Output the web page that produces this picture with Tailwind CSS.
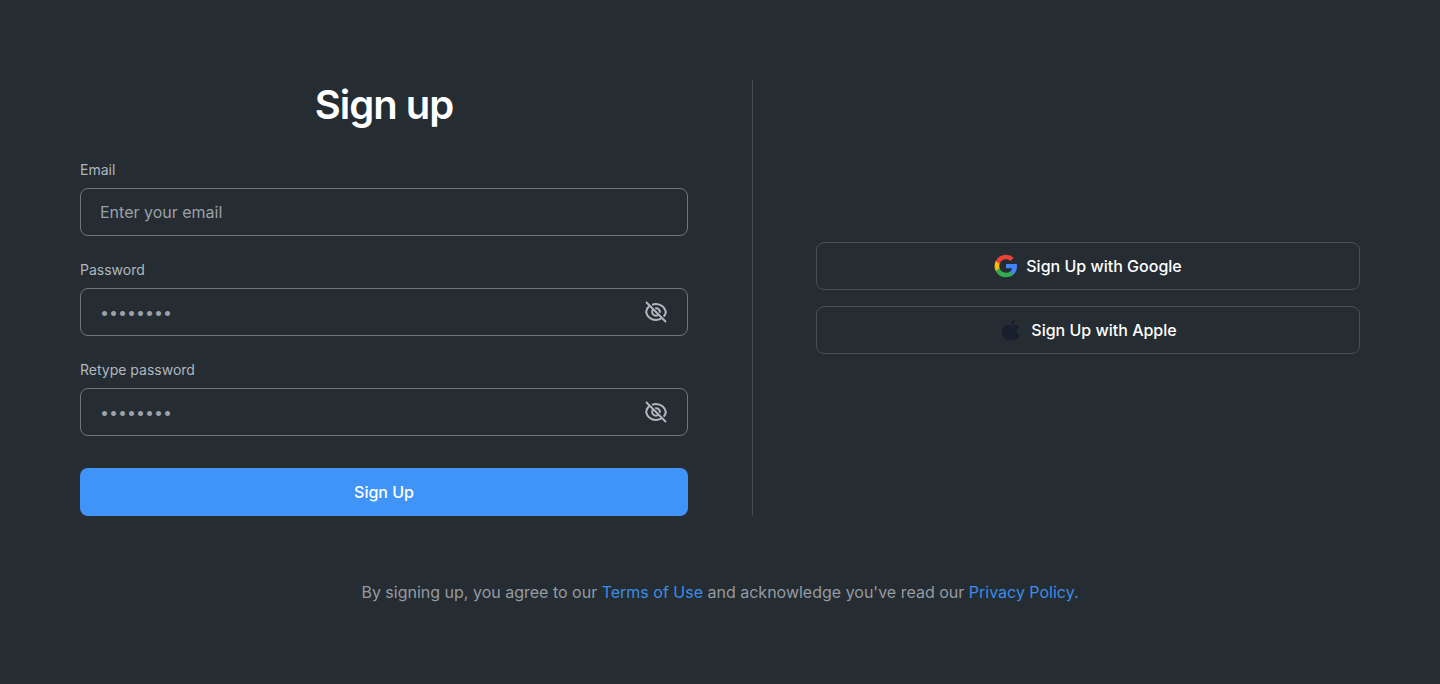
<!DOCTYPE html>
<html lang="en">
<head>
<meta charset="utf-8">
<meta name="viewport" content="width=device-width, initial-scale=1">
<title>Sign up</title>
<script src="https://cdn.jsdelivr.net/npm/@tailwindcss/browser@4"></script>
</head>
<body class="min-h-screen bg-[#252c32] font-['Inter',sans-serif] text-base text-white">
<svg class="hidden">
  <symbol id="eye-off" viewBox="0 0 24 24"><g fill="none" stroke="currentColor" stroke-width="2"><path d="M5.500 5.900C3.600 7.400 2.400 9.600 2.100 12c.9 4.600 4.900 8 9.900 8 2.400 0 4.600-.8 6.300-2.200"/><path d="M8 4.900C9.200 4.300 10.600 4 12 4c5 0 9 3.400 9.900 8-.3 1.700-1.100 3.300-2.200 4.600"/><path d="M9.300 9.300a3.700 3.700 0 0 0 5.300 5.300"/><path d="M11.200 8.300a3.700 3.700 0 0 1 4.500 4.500"/><path d="m2 2 20 20"/></g></symbol>
</svg>
<main class="p-6 md:p-20">
  <div class="grid gap-10 md:grid-cols-[21fr_19fr] md:gap-0">
    <form class="md:pr-16">
      <h1 class="mb-[30px] text-center text-[40px] leading-[50px] font-semibold tracking-tight">Sign up</h1>
      <div class="flex flex-col gap-6">
        <div class="flex flex-col gap-2">
          <label for="email" class="text-sm text-[#b0b7bf]">Email</label>
          <input id="email" type="email" placeholder="Enter your email" class="h-12 w-full rounded-lg border border-[#6e757c] bg-transparent px-[19px] placeholder:text-[#9aa1a9] focus:outline-none">
        </div>
        <div class="flex flex-col gap-2">
          <label for="password" class="text-sm text-[#b0b7bf]">Password</label>
          <div class="flex h-12 items-center rounded-lg border border-[#6e757c] px-[19px]">
            <input id="password" type="password" placeholder="••••••••" class="min-w-0 flex-1 bg-transparent placeholder:text-[#9aa1a9] focus:outline-none">
            <button type="button" aria-label="Show password" class="text-[#b0b7bf]"><svg class="size-6"><use href="#eye-off"/></svg></button>
          </div>
        </div>
        <div class="flex flex-col gap-2">
          <label for="retype" class="text-sm text-[#b0b7bf]">Retype password</label>
          <div class="flex h-12 items-center rounded-lg border border-[#6e757c] px-[19px]">
            <input id="retype" type="password" placeholder="••••••••" class="min-w-0 flex-1 bg-transparent placeholder:text-[#9aa1a9] focus:outline-none">
            <button type="button" aria-label="Show retyped password" class="text-[#b0b7bf]"><svg class="size-6"><use href="#eye-off"/></svg></button>
          </div>
        </div>
      </div>
      <button type="submit" class="mt-8 h-12 w-full rounded-lg bg-[#4094f7] font-medium">Sign Up</button>
    </form>
    <div class="flex flex-col justify-center gap-4 md:border-l md:border-[#434a51] md:pl-[63px]">
      <button type="button" class="flex h-12 items-center justify-center gap-2 rounded-lg border border-[#484f56] font-medium">
        <svg class="size-6" viewBox="0 0 24 24">
          <path fill="#4285f4" d="M23 12.25c0-.78-.07-1.53-.2-2.25H12v4.26h6.17a5.28 5.28 0 0 1-2.29 3.46v2.88h3.71C21.76 18.6 23 15.68 23 12.25Z"/>
          <path fill="#34a853" d="M12 23.3c3.1 0 5.7-1.02 7.59-2.77l-3.71-2.88c-1.03.69-2.34 1.1-3.88 1.1-2.98 0-5.51-2.02-6.41-4.73H1.76v2.97A11.47 11.47 0 0 0 12 23.3Z"/>
          <path fill="#fbbc05" d="M5.59 14.02A6.8 6.8 0 0 1 5.23 12c0-.7.13-1.39.36-2.02V7.01H1.76a11.2 11.2 0 0 0 0 9.98l3.83-2.97Z"/>
          <path fill="#ea4335" d="M12 5.25c1.68 0 3.19.58 4.38 1.71l3.29-3.29A11.03 11.03 0 0 0 12 .7 11.47 11.47 0 0 0 1.76 7.01l3.83 2.97C6.49 7.27 9.02 5.25 12 5.25Z"/>
        </svg>
        Sign Up with Google
      </button>
      <button type="button" class="flex h-12 items-center justify-center gap-2 rounded-lg border border-[#484f56] font-medium">
        <svg class="size-6" viewBox="0 0 24 24"><path fill="#182030" d="M20.800 17.300c-.5 1.100-.8 1.600-1.400 2.500-.9 1.300-2.100 2.400-3.600 2.400-1.400 0-1.700-.9-3.600-.9-1.900 0-2.300.9-3.600.9-1.500 0-2.700-1.200-3.500-2.500-2.500-3.700-2.700-8-1.200-10.300 1.100-1.700 2.800-2.600 4.400-2.600 1.600 0 2.700.9 4 .9s2.200-.9 4.100-.9c1.400 0 3 .8 4 2.100-3.500 1.900-2.900 7 .4 8.400ZM15.200 5.200c.7-.9 1.200-2.100 1-3.400-1.100.1-2.400.8-3.200 1.700-.7.8-1.200 2-1 3.200 1.200 0 2.500-.6 3.200-1.500Z"/></svg>
        Sign Up with Apple
      </button>
    </div>
  </div>
  <p class="mt-16 text-center text-[#949ba2]">By signing up, you agree to our <a href="#" class="text-[#3d8de8]">Terms of Use</a> and acknowledge you've read our <a href="#" class="text-[#3d8de8]">Privacy Policy.</a></p>
</main>
</body>
</html>
